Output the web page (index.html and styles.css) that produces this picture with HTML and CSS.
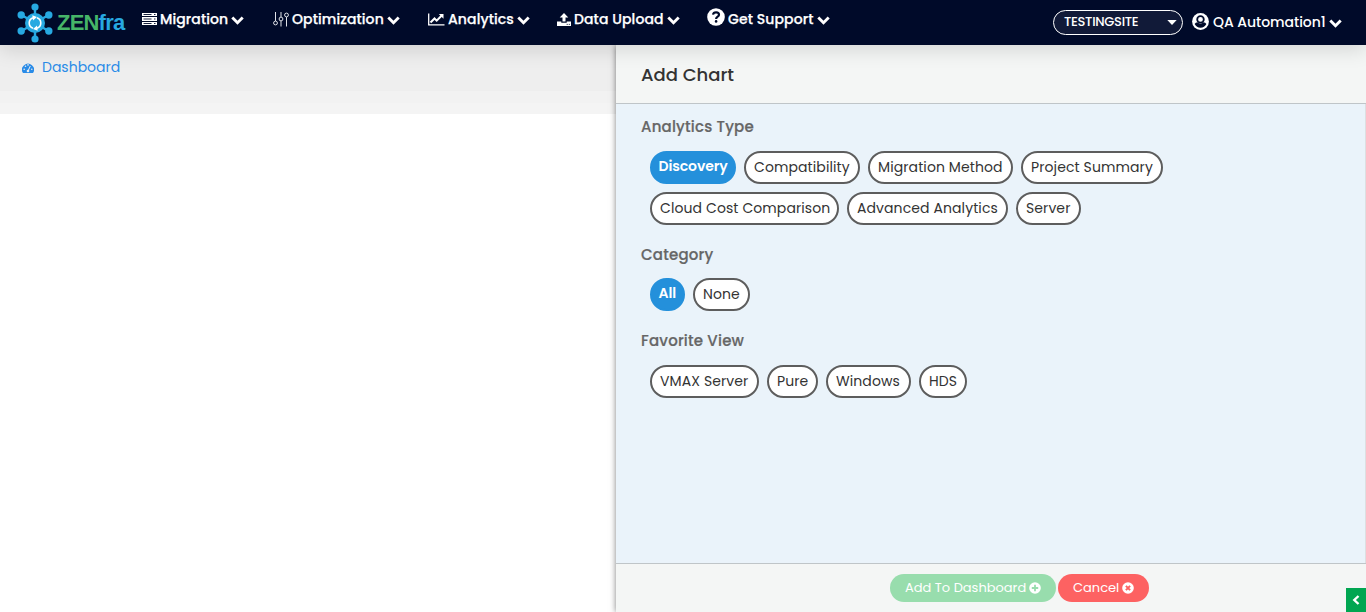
FILE: index.html
```html
<!DOCTYPE html>
<html lang="en">
<head>
<meta charset="utf-8">
<title>ZENfra</title>
<link rel="stylesheet" href="styles.css">
</head>
<body>
<svg class="defs" width="0" height="0">
  <symbol id="chev" viewBox="0 0 13 9"><path d="M1.300 1.500 6.500 6.700 11.700 1.500" fill="none" stroke="#fff" stroke-width="2.900"/></symbol>
</svg>
<header class="topbar">
  <div class="brand">
    <svg width="36" height="40" viewBox="0 0 36 40">
      <g stroke="#27a9e1" stroke-width="2.4"><path d="M18 3.500V36.500M4.500 12 31.500 28M31.500 12 4.500 28"/></g>
      <g fill="#27a9e1"><circle cx="18" cy="20" r="10"/><circle cx="18" cy="4" r="3.600"/><circle cx="18" cy="36" r="3.600"/><circle cx="4.200" cy="12" r="3.700"/><circle cx="31.800" cy="12" r="3.700"/><circle cx="4.200" cy="28" r="3.700"/><circle cx="31.800" cy="28" r="3.700"/></g>
      <g fill="none" stroke="#fff" stroke-width="1.600"><path d="M16 25.300A5.600 5.600 0 0 1 16 14.700M20 14.700A5.600 5.600 0 0 1 20 25.300"/></g>
      <path fill="#fff" d="M15.300 12.200 20 14 16 17.600zM20.700 27.800 16 26 20 22.400z"/>
    </svg>
    <span class="word"><b class="zen">ZEN</b><b class="fra">fra</b></span>
  </div>
  <nav class="nav">
    <a class="item migration"><svg class="ico" width="16" height="12" viewBox="0 0 16 12"><path fill="#fff" d="M0 0h15v3H0zM0 4h15v4H0zM0 9h15v3H0z"/><path stroke="#000a29" stroke-width=".9" d="M1.500 1.500h8M1.500 6h8M1.500 10.500h8M12 1.500h1.500M12 6h1.500M12 10.500h1.500"/></svg><span class="label">Migration</span><svg class="chev" width="13" height="9"><use href="#chev"/></svg></a>
    <a class="item optimization"><svg class="ico" width="16" height="15" viewBox="0 0 16 15"><g fill="none" stroke="#dfe2e8" stroke-width="1"><path d="M2.500 0v9M8 0v5M8 9v5.500M13.500 5v9.500"/><circle cx="2.500" cy="11" r="1.900"/><circle cx="8" cy="7" r="1.900"/><circle cx="13.500" cy="3" r="1.900"/></g></svg><span class="label">Optimization</span><svg class="chev" width="13" height="9"><use href="#chev"/></svg></a>
    <a class="item analytics"><svg class="ico" width="17" height="13" viewBox="0 0 17 13"><path fill="none" stroke="#fff" stroke-width="1.300" d="M.7.500v11.300H16.500"/><path fill="none" stroke="#fff" stroke-width="2" d="M2.500 9.500 6.500 5.500 8.700 7.700 13.500 2.800"/><path fill="#fff" d="M10.800 1H15.500V5.700z"/></svg><span class="label">Analytics</span><svg class="chev" width="13" height="9"><use href="#chev"/></svg></a>
    <a class="item upload"><svg class="ico" width="14" height="13" viewBox="0 0 14 13"><path fill="#fff" d="M7 0 11.300 4.500H8.500V8.500H5.500V4.500H2.700zM0 8.500H4.300V9.700H9.700V8.500H14V13H0z"/><path stroke="#000a29" stroke-width=".9" d="M9.700 11.400h1M11.800 11.400h1"/></svg><span class="label">Data Upload</span><svg class="chev" width="13" height="9"><use href="#chev"/></svg></a>
    <a class="item support"><svg class="ico" width="18" height="18" viewBox="0 0 18 18"><circle cx="9" cy="9" r="8.800" fill="#fff"/><path fill="none" stroke="#000a29" stroke-width="2.200" d="M6 6.700C6.500 3.400 12 3.600 12 6.700 12 8.700 9.100 8.500 9.100 11"/><circle cx="9.100" cy="13.400" r="1.300" fill="#000a29"/></svg><span class="label">Get Support</span><svg class="chev" width="13" height="9"><use href="#chev"/></svg></a>
  </nav>
  <div class="account">
    <div class="site"><span>TESTINGSITE</span><svg width="10" height="5" viewBox="0 0 10 5"><path fill="#fff" d="M.3 0H9.700L5 5z"/></svg></div>
    <svg class="user" width="17" height="17" viewBox="0 0 17 17"><circle cx="8.500" cy="8.500" r="8.400" fill="#fff"/><circle cx="8.500" cy="6.400" r="3.300" fill="none" stroke="#000a29" stroke-width="1.800"/><path fill="#000a29" d="M2.600 11Q3.600 9.500 5.500 9.300 8.500 12.200 11.500 9.300 13.400 9.500 14.400 11 12.500 14.700 8.500 14.700 4.500 14.700 2.600 11z"/></svg>
    <span class="name">QA Automation1</span>
    <svg class="chev" width="13" height="9"><use href="#chev"/></svg>
  </div>
</header>
<div class="main">
  <section class="page">
    <div class="crumbs"><svg width="12" height="10" viewBox="0 0 12 10"><path fill="#2a8ce8" d="M1 10A6 6 0 1 1 11 10z"/><g fill="#eee"><circle cx="2.200" cy="6.200" r=".8"/><circle cx="3.500" cy="3.200" r=".8"/><circle cx="6" cy="1.900" r=".8"/><circle cx="9.800" cy="6.200" r=".8"/><circle cx="6" cy="8" r="1.300"/></g><path stroke="#eee" d="M6 8 8.300 3"/></svg><span>Dashboard</span></div>
    <div class="strip"></div>
    <div class="strip light"></div>
  </section>
  <aside class="panel">
    <h1 class="title">Add Chart</h1>
    <div class="body">
      <h2>Analytics Type</h2>
      <div class="chips">
        <span class="chip on discovery">Discovery</span><span class="chip compat">Compatibility</span><span class="chip method">Migration Method</span><span class="chip summary">Project Summary</span><span class="chip cost">Cloud Cost Comparison</span><span class="chip advanced">Advanced Analytics</span><span class="chip server">Server</span>
      </div>
      <h2 class="category">Category</h2>
      <div class="chips">
        <span class="chip on all">All</span><span class="chip none">None</span>
      </div>
      <h2 class="favorite">Favorite View</h2>
      <div class="chips">
        <span class="chip vmax">VMAX Server</span><span class="chip pure">Pure</span><span class="chip windows">Windows</span><span class="chip hds">HDS</span>
      </div>
    </div>
    <footer class="actions">
      <button class="btn add"><span>Add To Dashboard</span><svg width="12" height="12" viewBox="0 0 12 12"><circle cx="6" cy="6" r="5.800" fill="#fff"/><path stroke="#98ddad" stroke-width="1.800" d="M6 2.800V9.200M2.800 6H9.200"/></svg></button>
      <button class="btn cancel"><span>Cancel</span><svg width="12" height="12" viewBox="0 0 12 12"><circle cx="6" cy="6" r="5.800" fill="#fff"/><path stroke="#fd6262" stroke-width="2" d="M3.900 3.900 8.100 8.100M8.100 3.900 3.900 8.100"/></svg></button>
    </footer>
  </aside>
</div>
<div class="toggle"><svg width="8" height="10" viewBox="0 0 8 10"><path fill="none" stroke="#fff" stroke-width="2.400" d="M6.500 1 2.300 5 6.500 9"/></svg></div>
</body>
</html>
```
FILE: styles.css
```css
* { box-sizing: border-box; }
body {
  margin: 0;
  height: 612px;
  overflow: hidden;
  background: #fff;
  font: 14px/20px "Poppins", "Inter", sans-serif;
}
svg { display: block; flex: none; }
.defs { position: absolute; }
.topbar {
  position: relative;
  z-index: 2;
  display: flex;
  height: 45px;
  background: #000a29;
  color: #fff;
  box-shadow: 0 5px 20px rgba(0, 0, 0, .13);
}
.brand { display: flex; width: 141px; padding: 3px 0 0 17px; }
.word {
  margin: 8px 0 0 4px;
  font: 700 22px/24px "Liberation Sans", sans-serif;
  letter-spacing: -.8px;
}
.zen { color: #46b568; }
.fra { color: #27a9e1; }
.nav { display: flex; }
.item { display: flex; height: 38px; align-items: center; font-weight: 500; letter-spacing: .1px; white-space: nowrap; -webkit-text-stroke: .25px #fff; }
.item .chev { margin-left: 3px; margin-top: 2px; }
.label { margin-left: 3px; }
.migration { width: 132px; }
.migration .ico { margin: -1px 0 0 1px; }
.migration .label { width: 68px; margin-left: 2px; }
.optimization { width: 155px; }
.optimization .label { width: 92px; }
.analytics { width: 129px; }
.analytics .label { width: 66px; }
.upload { width: 151px; }
.upload .label { width: 90px; }
.support .ico { margin: -4px 0 0 -1px; }
.support .label { width: 86px; }
.account { display: flex; align-items: center; height: 44px; margin-left: auto; padding-right: 24px; }
.site {
  display: flex;
  align-items: center;
  justify-content: space-between;
  width: 130px;
  height: 25px;
  padding: 0 5px 0 10px;
  border: 1px solid #fff;
  border-radius: 13px;
  background: #111a38;
  font-size: 13px;
  font-weight: 500;
  letter-spacing: -.3px;
}
.user { margin: -2px 4px 0 9px; }
.name { width: 112px; font-weight: 500; letter-spacing: -.05px; white-space: nowrap; }
.account .chev { margin: 2px 0 0 4px; }
.main { display: grid; grid-template-columns: 616px 750px; height: 567px; }
.crumbs {
  display: flex;
  height: 46px;
  padding: 12px 0 0 22px;
  background: #eee;
  color: #2a8ce8;
}
.crumbs svg { margin: 6px 8px 0 0; }
.strip { height: 12px; background: #f2f2f2; }
.strip.light { height: 11px; background: #f4f4f4; }
.panel {
  display: flex;
  flex-direction: column;
  background: #f4f6f5;
  box-shadow: 0 0 6px rgba(0, 0, 0, .5);
}
.title {
  height: 59px;
  margin: 0;
  padding: 16px 0 0 25px;
  border-bottom: 1px solid #bfc5c8;
  color: #333;
  font-size: 18px;
  font-weight: 500;
  line-height: 28px;
}
.body {
  height: 459px;
  padding: 13px 0 0 25px;
  border-right: 1px solid #dcdfe1;
  background: #eaf3fa;
}
h2 { height: 34px; margin: 0; color: #666; font-size: 15px; font-weight: 500; line-height: 20px; letter-spacing: .2px; -webkit-text-stroke: .2px #666; }
.category { height: 33px; margin-top: 20px; }
.favorite { margin-top: 20px; }
.chips { display: flex; flex-wrap: wrap; gap: 8px; width: 540px; padding-left: 9px; }
.chip {
  height: 33px;
  padding-left: 8px;
  border: 2px solid #5d5d5d;
  border-radius: 17px;
  background: #fff;
  color: #333;
  line-height: 29px;
  letter-spacing: .1px;
  white-space: nowrap;
}
.chip.on { padding-left: 6.500px; border-color: #2490db; background: #2490db; color: #fff; font-weight: 600; line-height: 27px; letter-spacing: -.1px; }
.discovery { width: 86px; }
.compat { width: 116px; }
.method { width: 145px; }
.summary { width: 142px; }
.cost { width: 189px; }
.advanced { width: 161px; }
.server { width: 65px; }
.all { width: 35px; }
.none { width: 57px; }
.vmax { width: 109px; }
.pure { width: 51px; }
.windows { width: 85px; }
.hds { width: 48px; }
.actions { display: flex; flex: 1; gap: 2px; padding: 10px 0 0 274px; border-top: 1px solid #bfc5c8; }
.btn {
  display: flex;
  align-items: center;
  height: 28px;
  padding: 0 0 0 15px;
  border: 0;
  border-radius: 14px;
  color: #fff;
  font: 13px/20px "Poppins", "Inter", sans-serif;
  white-space: nowrap;
}
.btn svg { margin: -1px 0 0 3px; }
.add { width: 166px; background: #98ddad; }
.cancel { width: 91px; background: #fd6262; }
.toggle {
  position: absolute;
  z-index: 3;
  right: 0;
  bottom: 0;
  width: 20px;
  height: 24px;
  padding: 7px 0 0 6px;
  background: #00a651;
}
```
